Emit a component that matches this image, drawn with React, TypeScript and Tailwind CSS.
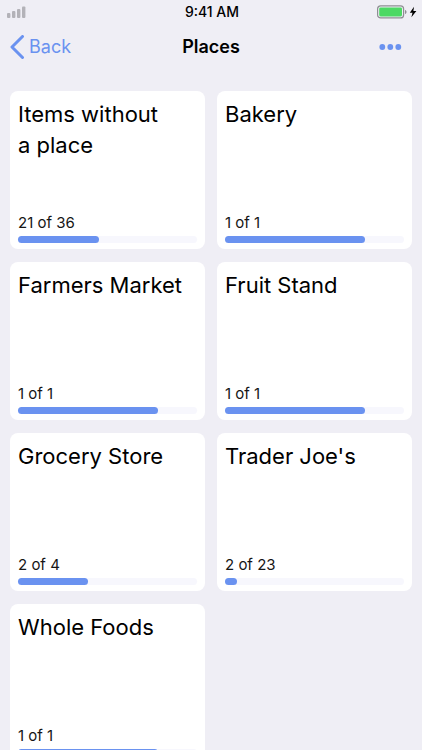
type Place = { name: string; done: number; total: number };

const places: Place[] = [
  { name: 'Items without\na place', done: 21, total: 36 },
  { name: 'Bakery', done: 1, total: 1 },
  { name: 'Farmers Market', done: 1, total: 1 },
  { name: 'Fruit Stand', done: 1, total: 1 },
  { name: 'Grocery Store', done: 2, total: 4 },
  { name: "Trader Joe's", done: 2, total: 23 },
  { name: 'Whole Foods', done: 1, total: 1 },
];

// A finished place fills this share of its track.
const FULL_BAR = 78;

function SignalIcon() {
  return (
    <svg width="20" height="12" viewBox="0 0 20 12" fill="#b3b2b8" aria-label="Signal" role="img">
      <rect x="0" y="7" width="3.4" height="5" rx="1" />
      <rect x="5" y="5" width="3.4" height="7" rx="1" />
      <rect x="10" y="3" width="3.4" height="9" rx="1" />
      <rect x="15" y="0.5" width="3.4" height="11.5" rx="1" />
    </svg>
  );
}

function BatteryIcon() {
  return (
    <svg width="40" height="14" viewBox="0 0 40 14" aria-label="Battery charging" role="img">
      <rect x="0.6" y="0.9" width="26" height="12" rx="3" fill="none" stroke="#8e8e93" strokeWidth="1.2" />
      <rect x="2.2" y="2.4" width="22.8" height="9" rx="1.4" fill="#4cd964" />
      <path d="M28 5v4c1-.4 1.5-1.1 1.5-2S29 5.400 28 5z" fill="#8e8e93" />
      <path d="M37 1.800 32.800 7.700h2.700L34.400 12.200 39.400 6h-3z" fill="#000" />
    </svg>
  );
}

function PlaceCard({ name, done, total }: Place) {
  const width = `${(done / total) * FULL_BAR}%`;
  return (
    <a href="#" className="flex h-[158px] flex-col justify-between rounded-lg bg-white p-2 pb-[6px]">
      <h2 className="text-[22px] leading-[31px] whitespace-pre-line text-black">{name}</h2>
      <div className="flex flex-col gap-[3px]">
        <p className="text-[15px] leading-5 text-[#161616]">
          {done} of {total}
        </p>
        <div
          role="progressbar"
          aria-label={name}
          aria-valuenow={done}
          aria-valuemax={total}
          className="h-[7px] rounded-full bg-[#f7f7fd]"
        >
          <div className="h-full rounded-full bg-[#6a92f0]" style={{ width }} />
        </div>
      </div>
    </a>
  );
}

export default function App() {
  return (
    <div className="flex h-screen flex-col bg-[#efeef5] font-['Inter','Liberation_Sans',sans-serif]">
      <div className="grid h-[23px] shrink-0 grid-cols-3 items-center pr-[5px] pl-[7px]">
        <SignalIcon />
        <span className="text-center text-sm font-medium text-black">9:41 AM</span>
        <span className="flex justify-end">
          <BatteryIcon />
        </span>
      </div>
      <header className="grid h-[47px] shrink-0 grid-cols-3 items-center px-[10px]">
        <button type="button" className="flex items-center gap-1 text-lg text-[#6a92f0]">
          <svg width="15" height="24" viewBox="0 0 15 24" fill="none" stroke="currentColor" strokeWidth="3" aria-hidden="true">
            <path d="M12.500 1.500 2 12l10.500 10.500" strokeLinecap="round" strokeLinejoin="round" />
          </svg>
          Back
        </button>
        <h1 className="text-center text-lg font-semibold text-black">Places</h1>
        <button type="button" aria-label="More" className="justify-self-end pr-[10px] text-[#6a92f0]">
          <svg width="23" height="6" viewBox="0 0 23 6" fill="currentColor" aria-hidden="true">
            <circle cx="3.300" cy="3" r="2.900" />
            <circle cx="11.300" cy="3" r="2.900" />
            <circle cx="19.300" cy="3" r="2.900" />
          </svg>
        </button>
      </header>
      <main className="grid flex-1 auto-rows-min grid-cols-2 gap-x-3 gap-y-[13px] overflow-y-auto px-[10px] pt-[21px] pb-3 [scrollbar-width:none]">
        {places.map((place) => (
          <PlaceCard key={place.name} {...place} />
        ))}
      </main>
    </div>
  );
}
